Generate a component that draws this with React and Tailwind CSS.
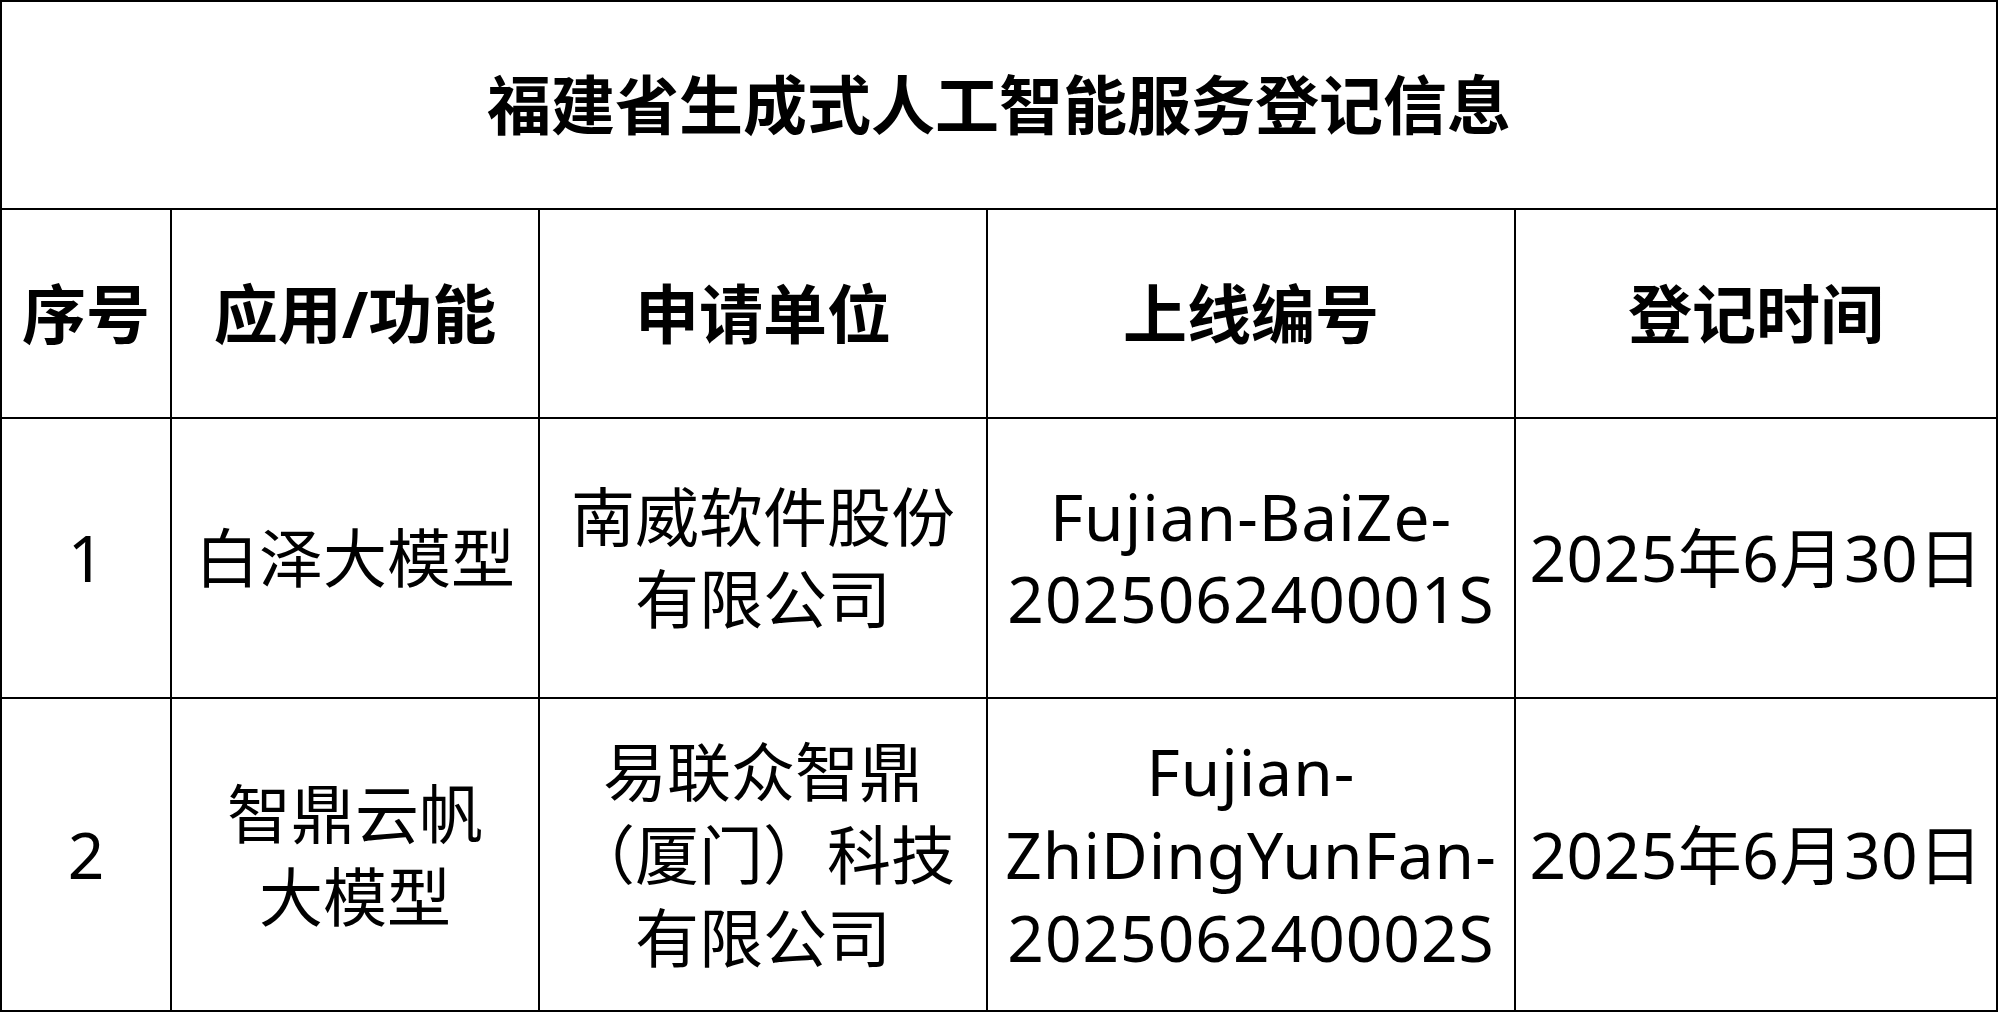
export default function App() {
  const font = { fontFamily: '"Noto Sans", "Noto Sans CJK SC", sans-serif' };
  const cell = "border-r-2 border-b-2 border-black text-center align-middle p-0";
  return (
    <div className="w-[1998px] h-[1014px] bg-white text-black overflow-hidden" style={font}>
      <table className="w-[1998px] table-fixed border-separate border-spacing-0 border-l-2 border-t-2 border-black">
        <colgroup>
          <col className="w-[170px]" />
          <col className="w-[368px]" />
          <col className="w-[448px]" />
          <col className="w-[528px]" />
          <col className="w-[482px]" />
        </colgroup>
        <tbody>
          <tr className="h-[208px]">
            <td colSpan={5} className={`${cell} text-[64px] font-bold leading-none`}>
              福建省生成式人工智能服务登记信息
            </td>
          </tr>
          <tr className="h-[209px] text-[64px] font-bold leading-none">
            <td className={cell}>序号</td>
            <td className={cell}>应用/功能</td>
            <td className={cell}>申请单位</td>
            <td className={cell}>上线编号</td>
            <td className={cell}>登记时间</td>
          </tr>
          <tr className="h-[280px] text-[64px] leading-[82px]">
            <td className={cell}>1</td>
            <td className={`${cell} whitespace-nowrap`}>白泽大模型</td>
            <td className={`${cell} whitespace-nowrap`}>
              南威软件股份
              <br />
              有限公司
            </td>
            <td className={`${cell} whitespace-nowrap tracking-[1px]`}>
              Fujian-BaiZe-
              <br />
              202506240001S
            </td>
            <td className={`${cell} whitespace-nowrap tracking-[0.5px]`}>2025年6月30日</td>
          </tr>
          <tr className="h-[313px] text-[64px] leading-[83px]">
            <td className={cell}>2</td>
            <td className={`${cell} whitespace-nowrap`}>
              智鼎云帆
              <br />
              大模型
            </td>
            <td className={`${cell} whitespace-nowrap`}>
              易联众智鼎
              <br />
              （厦门）科技
              <br />
              有限公司
            </td>
            <td className={`${cell} whitespace-nowrap tracking-[1px]`}>
              Fujian-
              <br />
              ZhiDingYunFan-
              <br />
              202506240002S
            </td>
            <td className={`${cell} whitespace-nowrap tracking-[0.5px]`}>2025年6月30日</td>
          </tr>
        </tbody>
      </table>
    </div>
  );
}
